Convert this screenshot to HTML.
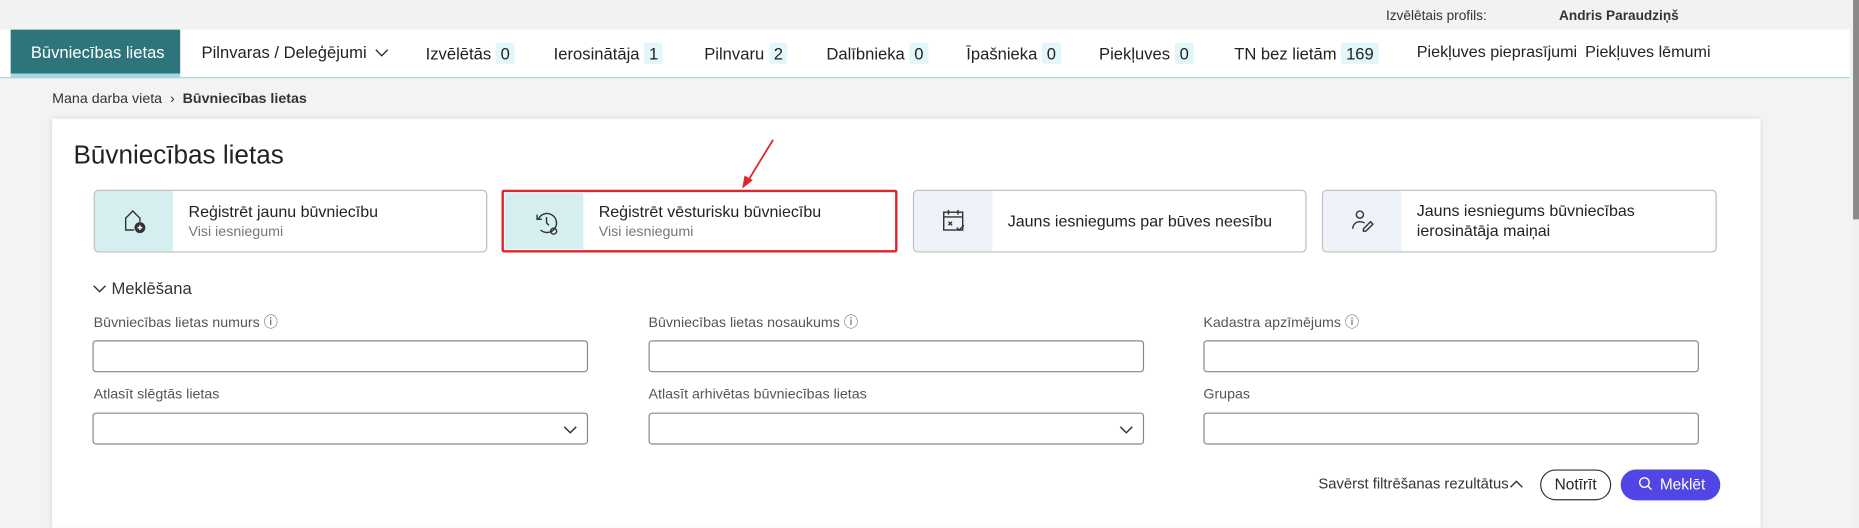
<!DOCTYPE html>
<html><head><meta charset="utf-8"><style>
*{box-sizing:border-box;margin:0;padding:0}
html,body{width:1859px;height:527px;overflow:hidden;background:#f3f3f3;font-family:"Liberation Sans",Arial,sans-serif;color:#222}
#w{position:absolute;left:0;top:0;width:1568px;height:445px;transform:scale(1.18559);transform-origin:0 0;background:#f3f3f3;overflow:hidden}
.a{position:absolute}
.top{left:0;top:3px;width:1560px;height:22px;background:#f2f2f2;font-size:11.5px;color:#333}
.nav{left:0;top:25px;width:1560px;height:41px;background:#fff;border-bottom:1px solid #a6d6dc}
.tab{position:absolute;top:11px;font-size:14px;color:#222;white-space:nowrap}
.b{display:inline-block;background:#e3f6f9;padding:1px 4px;margin-left:4px;border-radius:2px}
.card{left:44px;top:100px;width:1441px;height:360px;background:#fff;box-shadow:0 0 4px rgba(0,0,0,.15)}
.ac{position:absolute;top:160px;height:53px;border:1px solid #bbb;border-radius:4px;background:#fff;overflow:hidden}
.ac .ic{position:absolute;left:0;top:0;width:66px;height:100%;background:#d5eef0}
.ac .t{position:absolute;left:79px;font-size:13.5px;color:#222;line-height:17px}
.ac .s{font-size:12px;color:#777}
.lbl{position:absolute;font-size:12px;color:#555}
.in{position:absolute;height:27px;border:1px solid #888;border-radius:3px;background:#fff;width:418px}
</style></head><body><div id="w">
<div class="a top"><span class="a" style="left:1169px;top:5px">Izvēlētais profils:</span><b class="a" style="left:1315px;top:5px">Andris Paraudziņš</b></div>
<div class="a nav">
<div class="a" style="left:9px;top:0;width:143px;height:37px;background:#2e747b"></div>
<div class="a" style="left:9px;top:37px;width:143px;height:4px;background:#a8d8df"></div>
<span class="tab" style="left:26px;color:#fff">Būvniecības lietas</span>
<span class="tab" style="left:170px">Pilnvaras / Deleģējumi <svg width="12" height="8" viewBox="0 0 12 8" style="margin-left:3px"><path d="M1 1l5 5 5-5" fill="none" stroke="#333" stroke-width="1.2"/></svg></span>
<span class="tab" style="left:359px">Izvēlētās<span class="b">0</span></span>
<span class="tab" style="left:467px">Ierosinātāja<span class="b">1</span></span>
<span class="tab" style="left:594px">Pilnvaru<span class="b">2</span></span>
<span class="tab" style="left:697px">Dalībnieka<span class="b">0</span></span>
<span class="tab" style="left:815px">Īpašnieka<span class="b">0</span></span>
<span class="tab" style="left:927px">Piekļuves<span class="b">0</span></span>
<span class="tab" style="left:1041px">TN bez lietām<span class="b">169</span></span>
<span class="tab" style="left:1195px;font-size:13.6px">Piekļuves pieprasījumi</span>
<span class="tab" style="left:1337px;font-size:13.6px">Piekļuves lēmumi</span>
</div>
<div class="a" style="left:44px;top:76px;font-size:12px;color:#333">Mana darba vieta &nbsp;›&nbsp; <b>Būvniecības lietas</b></div>
<div class="a card"></div>
<div class="a" style="left:62px;top:118px;font-size:22px;color:#222">Būvniecības lietas</div>
<div class="ac" style="left:79px;width:332px"><div class="ic"><svg class="a" style="left:23px;top:15px" width="22" height="22" viewBox="0 0 22 22" fill="none" stroke="#333" stroke-width="1.2"><path d="M10 18H3V8l6-6 6 6v3"/><circle cx="15" cy="16" r="4" fill="#333"/><path d="M15 14v4M13 16h4" stroke="#fff"/></svg></div><div class="t" style="top:9px">Reģistrēt jaunu būvniecību<div class="s">Visi iesniegumi</div></div></div>
<div class="ac" style="left:423px;width:334px;border:2px solid #e0242b;border-radius:2px"><div class="ic" style="left:1px;top:1px;height:47px"><svg class="a" style="left:24px;top:13px" width="24" height="24" viewBox="0 0 24 24" fill="none" stroke="#333" stroke-width="1.2"><path d="M4 9a8 8 0 1 1 2 9"/><path d="M3 5v4h4"/><path d="M11 7v5l2 2"/><circle cx="17" cy="19" r="2.5"/></svg></div><div class="t" style="top:8px;left:80px">Reģistrēt vēsturisku būvniecību<div class="s">Visi iesniegumi</div></div></div>
<div class="ac" style="left:770px;width:332px"><div class="ic" style="background:#edf2f8"><svg class="a" style="left:22px;top:14px" width="24" height="24" viewBox="0 0 24 24" fill="none" stroke="#333" stroke-width="1.2"><rect x="3" y="4" width="16" height="15"/><path d="M3 8h16M7 2v4M15 2v4M7 12l3 3M10 12l-3 3M14 17l2 2 4-4"/></svg></div><div class="t" style="top:17px">Jauns iesniegums par būves neesību</div></div>
<div class="ac" style="left:1115px;width:333px"><div class="ic" style="background:#edf2f8"><svg class="a" style="left:23px;top:15px" width="22" height="22" viewBox="0 0 22 22" fill="none" stroke="#333" stroke-width="1.2"><circle cx="8" cy="5" r="3"/><path d="M2 17c0-4 3-6 6-6 2 0 3 .5 4 1M11 17l6-6 2 2-6 6h-2z"/></svg></div><div class="t" style="top:8px">Jauns iesniegums būvniecības<br>ierosinātāja maiņai</div></div>
<svg class="a" style="left:610px;top:112px" width="50" height="52"><path d="M42 6L20 42" stroke="#e0242b" stroke-width="1.5"/><path d="M16 47l2-11 7 4z" fill="#e0242b"/></svg>
<div class="a" style="left:78px;top:235px;font-size:14px;color:#333"><svg width="12" height="8" viewBox="0 0 12 8" style="margin-right:4px"><path d="M1 1l5 5 5-5" fill="none" stroke="#333" stroke-width="1.2"/></svg>Meklēšana</div>
<div class="lbl" style="left:79px;top:263px">Būvniecības lietas numurs ⓘ</div>
<div class="lbl" style="left:547px;top:263px">Būvniecības lietas nosaukums ⓘ</div>
<div class="lbl" style="left:1015px;top:263px">Kadastra apzīmējums ⓘ</div>
<div class="in" style="left:78px;top:287px"></div>
<div class="in" style="left:547px;top:287px"></div>
<div class="in" style="left:1015px;top:287px"></div>
<div class="lbl" style="left:79px;top:325px">Atlasīt slēgtās lietas</div>
<div class="lbl" style="left:547px;top:325px">Atlasīt arhivētas būvniecības lietas</div>
<div class="lbl" style="left:1015px;top:325px">Grupas</div>
<div class="in" style="left:78px;top:348px"><svg class="a" style="right:8px;top:10px" width="12" height="8" viewBox="0 0 12 8"><path d="M1 1l5 5 5-5" fill="none" stroke="#333" stroke-width="1.2"/></svg></div>
<div class="in" style="left:547px;top:348px"><svg class="a" style="right:8px;top:10px" width="12" height="8" viewBox="0 0 12 8"><path d="M1 1l5 5 5-5" fill="none" stroke="#333" stroke-width="1.2"/></svg></div>
<div class="in" style="left:1015px;top:348px"></div>
<div class="a" style="left:1112px;top:401px;font-size:12.5px;color:#333">Savērst filtrēšanas rezultātus<svg width="12" height="8" viewBox="0 0 12 8"><path d="M1 7l5-5 5 5" fill="none" stroke="#333" stroke-width="1.2"/></svg></div>
<div class="a" style="left:1299px;top:396px;width:60px;height:26px;border:1px solid #333;border-radius:13px;font-size:13px;text-align:center;line-height:24px;color:#222">Notīrīt</div>
<div class="a" style="left:1367px;top:396px;width:84px;height:26px;background:#4f46e5;border-radius:13px;font-size:13px;color:#fff;line-height:26px;padding-left:15px"><svg width="12" height="12" viewBox="0 0 12 12" style="vertical-align:-1px;margin-right:6px"><circle cx="5" cy="5" r="4" fill="none" stroke="#fff" stroke-width="1.2"/><path d="M8 8l3 3" stroke="#fff" stroke-width="1.2"/></svg>Meklēt</div>
<div class="a" style="left:1562px;top:0;width:6px;height:445px;background:#f0f0f0"></div>
<div class="a" style="left:1563px;top:0;width:5px;height:185px;background:#8a8a8a"></div>
</div></body></html>
